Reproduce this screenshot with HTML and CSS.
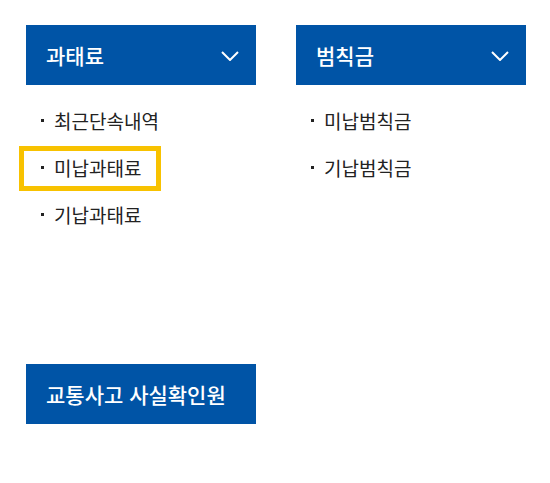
FILE: index.html
```html
<!DOCTYPE html>
<html lang="ko">
<head>
<meta charset="utf-8">
<link rel="stylesheet" href="styles.css">
</head>
<body>
<div class="page">
  <div class="grid">
    <section class="menu">
      <div class="menu-head">
        <span class="menu-title">과태료</span>
        <svg class="chev" width="18" height="10" viewBox="0 0 18 10"><path d="M1 1 L9 9 L17 1" fill="none" stroke="#fff" stroke-width="2"/></svg>
      </div>
      <ul class="menu-list">
        <li><a class="item">최근단속내역</a></li>
        <li><a class="item focus">미납과태료</a></li>
        <li><a class="item">기납과태료</a></li>
      </ul>
    </section>
    <section class="menu">
      <div class="menu-head">
        <span class="menu-title">범칙금</span>
        <svg class="chev" width="18" height="10" viewBox="0 0 18 10"><path d="M1 1 L9 9 L17 1" fill="none" stroke="#fff" stroke-width="2"/></svg>
      </div>
      <ul class="menu-list">
        <li><a class="item">미납범칙금</a></li>
        <li><a class="item">기납범칙금</a></li>
      </ul>
    </section>
  </div>
  <div class="single">
    <div class="menu-head"><span class="menu-title">교통사고 사실확인원</span></div>
  </div>
</div>
</body>
</html>
```
FILE: styles.css
```css
* { box-sizing: border-box; }
html, body { margin: 0; background: #fff; }
body { font-family: "Noto Sans CJK KR", "Noto Sans", sans-serif; }
.page { padding: 25px 0 0 26px; }
.grid { display: grid; grid-template-columns: 230px 230px; column-gap: 40px; }
.menu-head {
  height: 60px;
  background: #0054a6;
  color: #fff;
  display: flex;
  align-items: center;
  justify-content: space-between;
  padding: 0 17px 0 20px;
}
.menu-title { font-size: 21px; font-weight: 500; }
.chev { display: block; margin-top: 1px; }
.menu-list { list-style: none; margin: 0; padding: 12px 0 0 0; }
.menu-list li { height: 47px; }
.item {
  display: inline-block;
  margin-top: 9px;
  padding: 0 13px 2px 28px;
  line-height: 29px;
  font-size: 19px;
  color: #222;
  position: relative;
}
.item::before {
  content: "";
  position: absolute;
  left: 15px;
  top: 13px;
  width: 3px;
  height: 3px;
  background: #222;
}
.item.focus { outline: 5px solid #f8c200; outline-offset: 2px; }
.single { width: 230px; margin-top: 126px; }
```
